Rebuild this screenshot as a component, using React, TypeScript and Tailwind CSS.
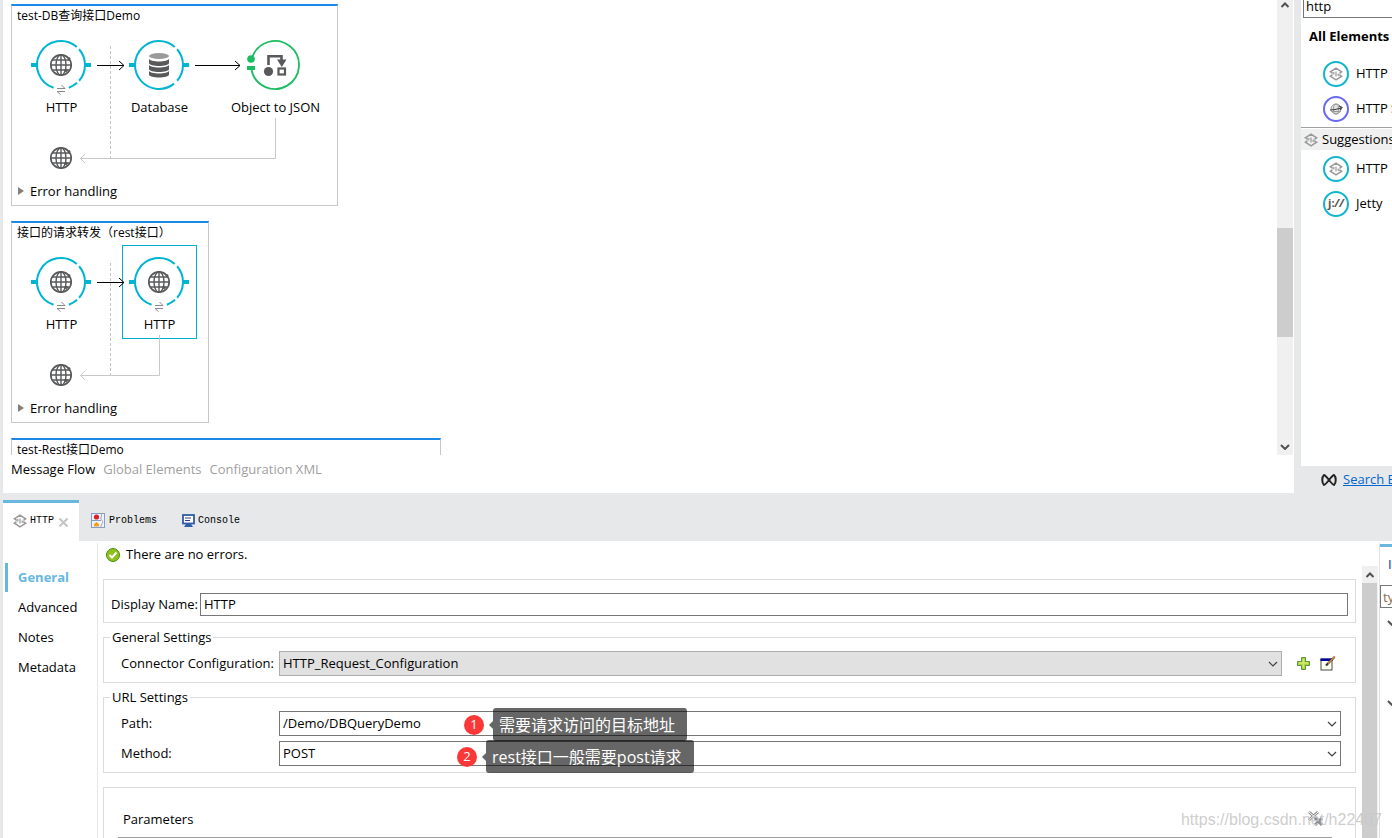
import { useState, type ReactNode } from 'react';
import clsx from 'clsx';

type NodeKind = 'http' | 'database' | 'transform';

type FlowNodeProps = {
  kind: NodeKind;
  label: string;
  className: string;
  selected?: boolean;
};

const SECTIONS = ['General', 'Advanced', 'Notes', 'Metadata'];
const EDITOR_TABS = ['Message Flow', 'Global Elements', 'Configuration XML'];

function arc(from: number, to: number, r = 24) {
  const rad = (deg: number) => (deg * Math.PI) / 180;
  const large = to - from > 180 ? 1 : 0;
  return `M${r * Math.cos(rad(from))} ${r * Math.sin(rad(from))}A${r} ${r} 0 ${large} 1 ${r * Math.cos(rad(to))} ${r * Math.sin(rad(to))}`;
}

function Globe() {
  return (
    <g fill="none" stroke="#58595b" strokeWidth="1.4">
      <circle r="10.2" strokeWidth="1.7" />
      <ellipse rx="5" ry="10.2" />
      <path d="M0-10V10M-10 0H10M-8.6-5H8.6M-8.6 5H8.6" />
      <circle cx="8" cy="-6.4" r="1.4" fill="#58595b" stroke="none" />
      <circle cx="5" cy="5.4" r="1.7" fill="#58595b" stroke="none" />
    </g>
  );
}

function NodeIcon({ kind }: { kind: NodeKind }) {
  if (kind === 'transform') {
    return (
      <svg width="61" height="60" viewBox="-30 -30 61 60" className="shrink-0">
        <path d={arc(198, 530)} fill="none" stroke="#1bbd62" strokeWidth="1.8" />
        <circle cx="-24" cy="-6" r="3.8" fill="#1bbd62" />
        <rect x="-28" y="1" width="8" height="4" fill="#1bbd62" />
        <circle cx="-6.5" cy="6.5" r="4.6" fill="#58595b" />
        <path d="M-6.5 0V-8.8H6.5V-5" fill="none" stroke="#58595b" strokeWidth="2.6" />
        <path d="M2-5.500H11.500L6.800 2Z" fill="#58595b" />
        <rect x="3.5" y="3.500" width="6.500" height="6" fill="none" stroke="#58595b" strokeWidth="2.2" />
      </svg>
    );
  }

  const arcs = kind === 'http' ? [arc(108, 311), arc(319, 401), arc(408, 431)] : [arc(51, 311), arc(319, 401)];
  return (
    <svg width="61" height="60" viewBox="-30 -30 61 60" className="shrink-0">
      <g fill="none" stroke="#00b5d1" strokeWidth="2">
        {arcs.map((d) => (
          <path key={d} d={d} />
        ))}
      </g>
      <path d="M-30-2h6v4h-6zM24-2h6v4h-6z" fill="#00b5d1" />
      {kind === 'http' ? (
        <>
          <Globe />
          <path d="M-4 23.500H4L0.500 20M4 26.500H-4L-0.500 29.500" fill="none" stroke="#8a8a8a" />
        </>
      ) : (
        <g>
          <path d="M-10-6.500v4.500c0 4 20 4 20 0v-4.500c0 4-20 4-20 0z" fill="#58595b" />
          <path d="M-10-.5v4.500c0 4 20 4 20 0v-4.500c0 4-20 4-20 0z" fill="#58595b" />
          <path d="M-10 5.500v4c0 4 20 4 20 0v-4c0 4-20 4-20 0z" fill="#58595b" />
          <ellipse cy="-9" rx="10" ry="3" fill="#9a9a9a" />
        </g>
      )}
    </svg>
  );
}

function FlowNode({ kind, label, className, selected }: FlowNodeProps) {
  return (
    <div
      className={clsx(
        'absolute top-[2px] flex h-[94px] w-[75px] flex-col items-center border pt-[6px]',
        selected ? 'border-[#00b0cc]' : 'border-transparent',
        className,
      )}
    >
      <NodeIcon kind={kind} />
      <span className="mt-[2px] whitespace-nowrap leading-5">{label}</span>
    </div>
  );
}

function FlowBox({ title, className, returnX, children }: { title: string; className: string; returnX: number; children: ReactNode }) {
  return (
    <section className={clsx('flex flex-col border border-t-2 border-[#c8c8c8] border-t-[#1a88e6]', className)}>
      <h2 className="pl-[5px] text-[12px] leading-5">{title}</h2>
      <div className="relative h-[155px]">
        {children}
        <svg className="absolute inset-0 h-full w-full" fill="none">
          <path d="M98.500 20V132" stroke="#c4c4c4" strokeDasharray="3 2" />
          <path d={`M${returnX + 0.5} 92V132.500H69M73 128L68.500 132.500L73 137`} stroke="#c8c8c8" />
          <path d="M85 39.500H112M107 35L112 39.500L107 44" stroke="#000" />
          {returnX > 200 && <path d="M183 39.500H228M223 35L228 39.500L223 44" stroke="#000" />}
          <g transform="translate(49 132)">
            <Globe />
          </g>
        </svg>
      </div>
      <button type="button" className="mb-1 flex items-center gap-[6px] pl-[6px] text-left leading-5">
        <svg width="6" height="8" viewBox="0 0 6 8">
          <path d="M0 0L6 4L0 8Z" fill="#808080" />
        </svg>
        Error handling
      </button>
    </section>
  );
}

function ConnectorIcon() {
  return (
    <svg width="14" height="14" viewBox="0 0 14 14" fill="none" stroke="#999" strokeWidth="1.5" className="shrink-0">
      <path d="M3.800 6.300L1.400 4.800L7 1.200L12.600 4.800L10.500 6.300M3.500 7.700L1.400 9.200L7 12.800L12.600 9.200L10.200 7.700" />
      <path d="M7 4.500V9.500M4.800 5V7.500M9.200 6.500V9" strokeWidth="1.200" />
    </svg>
  );
}

function Chevron({ up, bold }: { up?: boolean; bold?: boolean }) {
  return (
    <svg width="10" height="6" viewBox="0 0 10 6" fill="none" stroke={bold ? '#505050' : '#404040'} strokeWidth={bold ? 2 : 1.2}>
      <path d={up ? 'M1.500 5L5 1.500L8.500 5' : 'M1 1L5 5L9 1'} />
    </svg>
  );
}

function PaletteItem({ label, purple, children }: { label: string; purple?: boolean; children: ReactNode }) {
  return (
    <li className="flex h-[35px] items-center gap-[7px] whitespace-nowrap pl-[22px]">
      <span
        className={clsx(
          'flex h-[26px] w-[26px] shrink-0 items-center justify-center rounded-full border-2',
          purple ? 'border-[#6a6af0]' : 'border-[#12b5cc]',
        )}
      >
        {children}
      </span>
      {label}
    </li>
  );
}

function SelectRow({ id, label, value, disabled, children }: { id: string; label: string; value: string; disabled?: boolean; children?: ReactNode }) {
  return (
    <div className="flex items-center">
      <label htmlFor={id} className="w-[158px] shrink-0">{label}</label>
      <div className="relative min-w-0 flex-1">
        <select
          id={id}
          className={clsx(
            'block h-[25px] w-full appearance-none border pb-[2px] pl-[3px] leading-5 outline-none',
            disabled ? 'border-[#adadad] bg-[#e1e1e1]' : 'border-[#767676] bg-white',
          )}
        >
          <option>{value}</option>
        </select>
        <span className="pointer-events-none absolute inset-y-0 right-[4px] flex items-center">
          <Chevron />
        </span>
        {!disabled && children}
      </div>
      {disabled && children}
    </div>
  );
}

function Callout({ step, text, className }: { step: number; text: string; className: string }) {
  return (
    <div className={clsx('pointer-events-none absolute z-10 flex items-center text-[16px] text-white', className)}>
      <span className="flex h-5 w-5 items-center justify-center rounded-full bg-[#fb3838] text-[13px]">{step}</span>
      <svg width="4" height="8" viewBox="0 0 4 8" className="ml-[5px]">
        <path d="M4 0V8L0 4Z" fill="#000" fillOpacity="0.6" />
      </svg>
      <span className="whitespace-nowrap rounded-[3px] bg-black/60 pl-[6px] pr-[12px] pt-px leading-8">{text}</span>
    </div>
  );
}

export default function App() {
  const [section, setSection] = useState('General');
  const [editorTab, setEditorTab] = useState('Message Flow');

  return (
    <div className="relative flex h-screen flex-col gap-[7px] overflow-hidden bg-[#e6e8ea] pl-[3px] font-['Open_Sans','Noto_Sans_CJK_SC',sans-serif] text-[13px] text-black">
      <div className="flex min-h-0 flex-[493] gap-[7px]">
        <main className="flex min-w-0 flex-1 flex-col bg-white">
          <div className="flex min-h-0 flex-1">
            <div className="flex min-w-0 flex-1 flex-col gap-[15px] overflow-hidden pl-2 pt-1">
              <FlowBox title="test-DB查询接口Demo" className="w-[327px]" returnX={263}>
                <FlowNode kind="http" label="HTTP" className="left-[12px]" />
                <FlowNode kind="database" label="Database" className="left-[110px]" />
                <FlowNode kind="transform" label="Object to JSON" className="left-[226px]" />
              </FlowBox>
              <FlowBox title="接口的请求转发（rest接口）" className="w-[198px]" returnX={147}>
                <FlowNode kind="http" label="HTTP" className="left-[12px]" />
                <FlowNode kind="http" label="HTTP" className="left-[110px]" selected />
              </FlowBox>
              <section className="w-[430px] shrink-0 border border-t-2 border-[#c8c8c8] border-t-[#1a88e6] pb-8">
                <h2 className="pl-[5px] text-[12px] leading-5">test-Rest接口Demo</h2>
              </section>
            </div>
            <div className="mr-[1px] flex w-4 flex-col items-center justify-between bg-[#f0f0f0] pb-[5px] pt-[2px]">
              <Chevron up bold />
              <div className="mt-[112px] h-[109px] w-full bg-[#cdcdcd]" />
              <Chevron bold />
            </div>
          </div>
          <nav className="flex h-[38px] gap-2 pb-[9px] pl-2">
            {EDITOR_TABS.map((tab) => (
              <button
                key={tab}
                type="button"
                onClick={() => setEditorTab(tab)}
                className={tab === editorTab ? 'text-black' : 'text-[#a0a0a0]'}
              >
                {tab}
              </button>
            ))}
          </nav>
        </main>

        <aside className="flex w-[91px] shrink-0 flex-col overflow-hidden">
          <div className="flex-1 bg-white">
            <input
              aria-label="Search elements"
              defaultValue="http"
              className="ml-[2px] block h-[18px] w-[140px] border border-t-0 border-[#767676] pb-[3px] pl-[2px] outline-none"
            />
            <h3 className="mt-2 whitespace-nowrap pl-2 font-bold leading-5">All Elements</h3>
            <ul className="mt-[10px] border-b border-[#a0a0a0] pb-px">
              <PaletteItem label="HTTP"><ConnectorIcon /></PaletteItem>
              <PaletteItem label="HTTP Static Resource Handler" purple>
                <svg width="14" height="14" viewBox="-7 -7 14 14" fill="none" stroke="#999">
                  <circle r="5" fill="#e4e4e4" />
                  <ellipse rx="2.5" ry="5" />
                  <path d="M-4.500 2.500H4.500" />
                  <path d="M-6 1C-2 1 2 0 5-1M3-3L6-1.500L4 1" stroke="#444" strokeWidth="1.2" />
                </svg>
              </PaletteItem>
            </ul>
            <h3 className="mt-px flex h-[21px] items-center gap-[4px] whitespace-nowrap bg-[#f0f0f0] pl-[3px]">
              <ConnectorIcon />
              Suggestions
            </h3>
            <ul className="mt-[1px]">
              <PaletteItem label="HTTP"><ConnectorIcon /></PaletteItem>
              <PaletteItem label="Jetty">
                <span className="text-[11px] font-bold text-[#555]">j:<i>//</i></span>
              </PaletteItem>
            </ul>
          </div>
          <div className="flex h-[27px] items-center gap-[6px] whitespace-nowrap pl-5">
            <svg width="16" height="14" viewBox="0 0 16 14" fill="none" stroke="#222" strokeWidth="2" strokeLinejoin="round" className="shrink-0">
              <path d="M3 2C.7 4 .7 10 3 12C5 12 11 2 13 2C15.300 4 15.300 10 13 12C11 12 5 2 3 2Z" />
            </svg>
            <a href="#exchange" className="text-[#0066cc] underline">Search Exchange...</a>
          </div>
        </aside>
      </div>

      <div className="flex min-h-0 flex-[338] flex-col">
        <div className="flex h-[41px] shrink-0 font-['Liberation_Mono',monospace] text-[10px]">
          <button type="button" className="flex w-[76px] items-center gap-[3px] border-t-[3px] border-[#67b7de] bg-white pb-[3px] pl-[10px]">
            <ConnectorIcon />
            HTTP
            <svg width="9" height="9" viewBox="0 0 9 9" stroke="#c4c4c4" strokeWidth="2" className="ml-[2px] mt-[3px]">
              <path d="M.5.5L8.500 8.500M8.500.5L.5 8.500" />
            </svg>
          </button>
          <button type="button" className="flex items-center gap-[4px] pl-3">
            <svg width="14" height="15" viewBox="0 0 14 15">
              <rect x=".5" y=".5" width="13" height="14" fill="#eef2fb" stroke="#8a9cc4" />
              <path d="M10 .5C12 3 8 5 11 7.500C13 10 9 12 10 14.500" fill="#fff" stroke="#8a9cc4" />
              <path d="M0 7.500H10" stroke="#8a9cc4" />
              <circle cx="5.500" cy="4" r="2.600" fill="#d8232a" />
              <path d="M3 13.500V11L5.500 9L8 11V13.500Z" fill="#f2a01e" />
            </svg>
            Problems
          </button>
          <button type="button" className="flex items-center gap-[3px] pl-[25px]">
            <svg width="13" height="13" viewBox="0 0 13 13">
              <rect x="1" y="1" width="11" height="8.500" fill="#fff" stroke="#2f5da8" strokeWidth="1.800" />
              <path d="M3 4H9M3 6.500H8" stroke="#3d3d80" />
              <path d="M2 13L4 10H9L11 13Z" fill="#2f5da8" />
            </svg>
            Console
          </button>
        </div>

        <div className="flex min-h-0 flex-1 bg-white">
          <nav className="mt-[2px] w-[95px] shrink-0 border-r border-[#e6e6e6] pl-[2px] pt-5">
            {SECTIONS.map((s) => (
              <button
                key={s}
                type="button"
                onClick={() => setSection(s)}
                className={clsx(
                  'mb-[1px] block h-[29px] w-full border-l-[3px] pl-[10px] text-left',
                  s === section ? 'border-[#67b7de] font-bold text-[#67b7de]' : 'border-transparent',
                )}
              >
                {s}
              </button>
            ))}
          </nav>

          <div className="flex min-w-0 flex-1">
            <form className="min-w-0 flex-1 pl-[5px]">
              <p className="flex h-7 items-center gap-[6px] pl-[3px]">
                <svg width="14" height="14" viewBox="0 0 14 14">
                  <circle cx="7" cy="7" r="6.5" fill="#8cc21a" stroke="#4f8a14" />
                  <path d="M3.500 7L6 9.500L10.500 4.500" fill="none" stroke="#fff" strokeWidth="2" />
                </svg>
                There are no errors.
              </p>

              <div className="mr-[6px]">
                <div className="mt-[10px] flex h-11 items-center border border-[#dcdcdc] px-[7px] pt-[7px]">
                  <label htmlFor="display-name" className="w-[89px] shrink-0">Display Name:</label>
                  <input
                    id="display-name"
                    defaultValue="HTTP"
                    className="h-[23px] min-w-0 flex-1 border border-[#767676] pb-px pl-[3px] outline-none"
                  />
                </div>

                <fieldset className="mt-1 border border-[#dcdcdc] pb-[6px] pl-[17px] pt-1">
                  <legend className="-ml-[11px] px-[2px] leading-5">General Settings</legend>
                  <SelectRow id="connector" label="Connector Configuration:" value="HTTP_Request_Configuration" disabled>
                    <button type="button" aria-label="Add configuration" className="ml-[15px]">
                      <svg width="13" height="13" viewBox="0 0 13 13">
                        <path d="M4.500.5H8.500V4.500H12.500V8.500H8.500V12.500H4.500V8.500H.5V4.500H4.500Z" fill="#a5d43c" stroke="#5c9440" />
                        <path d="M6.500 2V11M2 6H11" stroke="#d8e86a" strokeWidth="1.4" />
                      </svg>
                    </button>
                    <button type="button" aria-label="Edit configuration" className="ml-[10px] mr-[19px]">
                      <svg width="16" height="15" viewBox="0 0 16 15">
                        <rect x="1" y="3" width="11" height="11" fill="#fffff0" stroke="#4c4c4c" />
                        <path d="M.5 2.500H12.500V5H.5Z" fill="#00009c" />
                        <path d="M6 9.500L14.500 1" stroke="#333" strokeWidth="2.2" />
                        <path d="M8 7.500L15 .5" stroke="#d98a3c" strokeWidth="1.5" />
                      </svg>
                    </button>
                  </SelectRow>
                </fieldset>

                <fieldset className="mt-1 border border-[#dcdcdc] pb-[6px] pl-[17px] pr-[14px] pt-1">
                  <legend className="-ml-[11px] px-[2px] leading-5">URL Settings</legend>
                  <div className="flex flex-col gap-[5px]">
                    <SelectRow id="path" label="Path:" value="/Demo/DBQueryDemo">
                      <Callout step={1} text="需要请求访问的目标地址" className="-top-[3px] left-[185px]" />
                    </SelectRow>
                    <SelectRow id="method" label="Method:" value="POST">
                      <Callout step={2} text="rest接口一般需要post请求" className="-top-[1px] left-[178px]" />
                    </SelectRow>
                  </div>
                </fieldset>

                <section className="mt-[14px] border border-[#dcdcdc] pb-10 pl-[14px] pr-[23px] pt-[21px]">
                  <div className="flex items-center justify-between border-b border-[#a0a0a0] pb-2 pl-[5px] pr-[8px]">
                    <h3 className="leading-5">Parameters</h3>
                    <button type="button" aria-label="Remove parameters" className="-my-2">
                      <svg width="16" height="16" viewBox="0 0 16 16" fill="none" stroke="#8c8c8c">
                        <path d="M1 1L10 9M10 1L1 9" strokeWidth="2.8" />
                        <path d="M1 1L10 9M10 1L1 9" stroke="#fff" />
                        <path d="M7 7L14 14M14 7L7 14" strokeWidth="3" />
                      </svg>
                    </button>
                  </div>
                </section>
              </div>
            </form>
            <div className="mr-[1px] mt-[25px] flex w-4 flex-col bg-[#f0f0f0]">
              <span className="flex h-[17px] items-center justify-center">
                <Chevron up bold />
              </span>
              <div className="mr-[1px] flex-1 bg-[#cdcdcd]" />
            </div>
          </div>

          <aside className="mt-[2px] w-[13px] shrink-0 overflow-hidden border-l border-[#e0e0e0] pt-px">
            <div className="h-[3px] bg-[#67b7de]" />
            <button type="button" className="mt-[7px] block whitespace-nowrap pl-2 leading-5 text-[#003c8c]">Input</button>
            <input
              aria-label="Filter fields"
              placeholder="type filter text"
              className="mt-[11px] block h-[23px] w-[120px] border border-[#767676] pl-[2px] text-[#555] placeholder:text-[#8a6a50]"
            />
            <div className="flex flex-col gap-[74px] pl-[7px] pt-[12px]">
              <Chevron bold />
              <Chevron bold />
            </div>
          </aside>
        </div>
      </div>

      <span className="pointer-events-none absolute bottom-2 right-[10px] font-['Liberation_Sans',sans-serif] text-[16px] leading-5 text-[#c8c8c8]/90">
        https://blog.csdn.net/h22407
      </span>
    </div>
  );
}
